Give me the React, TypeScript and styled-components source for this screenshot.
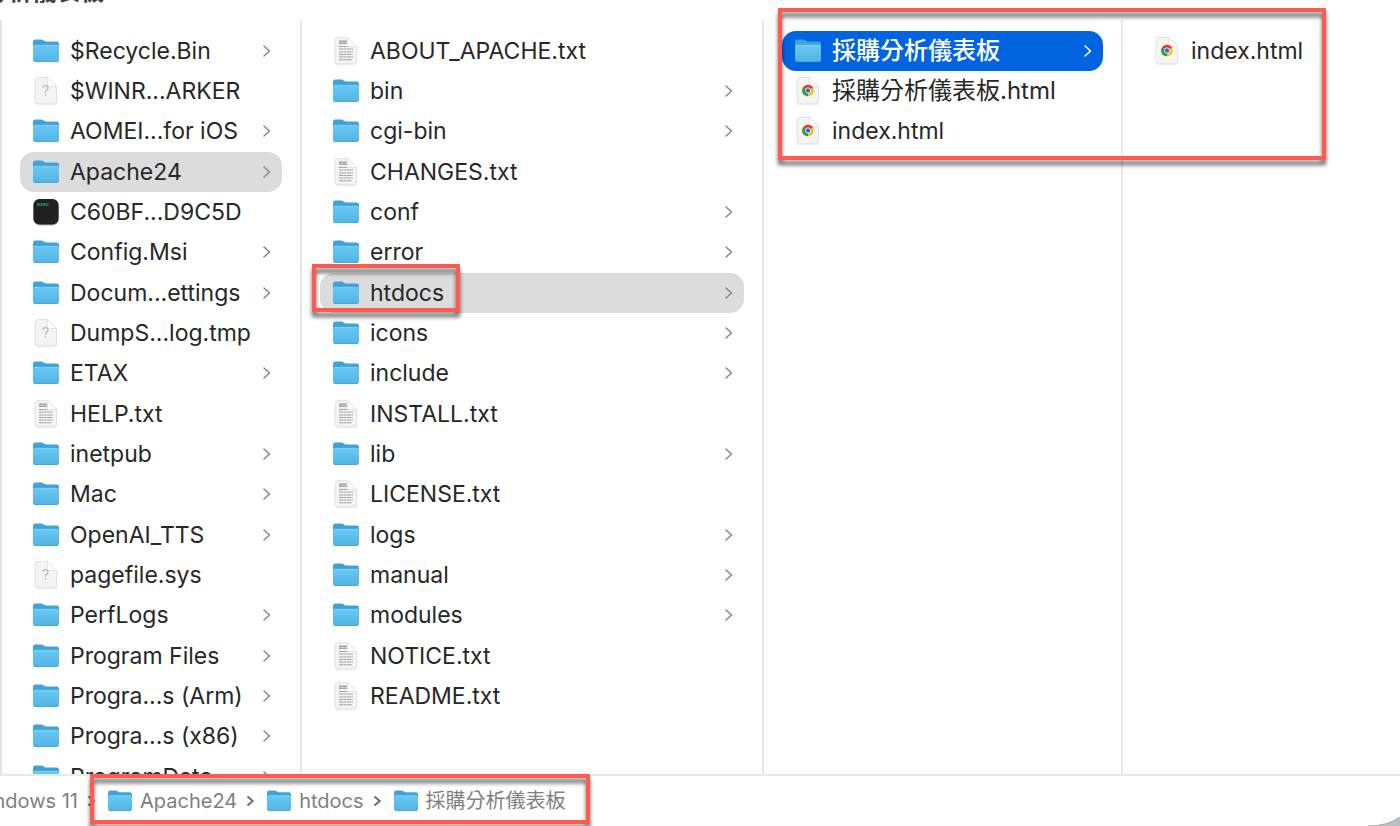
import React from "react";
import styled, { createGlobalStyle } from "styled-components";

type Kind = "folder" | "text" | "unknown" | "exec" | "chrome";
type Entry = { name: string; kind: Kind; selected?: "muted" | "active"; marked?: boolean; han?: boolean };

const GlobalStyle = createGlobalStyle`
  * { box-sizing: border-box; }
  body { margin: 0; background: #fff; }
`;

const Window = styled.div`
  position: relative;
  min-height: 100vh;
  display: flex;
  flex-direction: column;
  overflow: hidden;
  background: #fff;
  color: #272727;
  font-family: Inter, "Noto Sans CJK TC", sans-serif;
`;

const TitleBar = styled.header`
  height: 20px;
  display: flex;
  align-items: flex-start;
  overflow: hidden;
`;

const TitleClip = styled.div`
  width: 104px;
  height: 4px;
  display: flex;
  justify-content: flex-end;
  align-items: flex-end;
  overflow: hidden;
`;

const Title = styled.h1`
  margin: 0;
  flex: none;
  font-size: 24px;
  line-height: 24px;
  font-weight: 700;
  color: #404040;
`;

const Browser = styled.main`
  position: relative;
  flex: 1 0 0;
  height: 754px;
  min-height: 0;
  display: grid;
  grid-template-columns: 302px 462px 359px 1fr;
  grid-template-rows: minmax(0, 1fr);
`;

const Column = styled.ul<{ $first?: boolean; $last?: boolean }>`
  margin: 0;
  padding: 11px 18px 0;
  list-style: none;
  overflow: hidden;
  border-left: ${(p) => (p.$first ? "2px solid #e2e2e2" : "0")};
  border-right: ${(p) => (p.$last ? "0" : "2px solid #e8e8e8")};
`;

const Item = styled.li`
  position: relative;
  &:nth-child(3n) {
    margin-bottom: 1px;
  }
`;

const Row = styled.button<{ $state?: "muted" | "active" }>`
  width: 100%;
  height: 40px;
  display: flex;
  align-items: center;
  gap: 11px;
  padding: 0 10px 0 13px;
  border: 0;
  border-radius: 14px;
  background: ${(p) => (p.$state === "active" ? "#0064e1" : p.$state === "muted" ? "#dcdcdc" : "transparent")};
  color: ${(p) => (p.$state === "active" ? "#fff" : "inherit")};
  font: inherit;
  font-size: 23px;
  line-height: 40px;
  text-align: left;
`;

const IconSlot = styled.span`
  width: 26px;
  flex: none;
  display: flex;
  justify-content: center;
`;

const Name = styled.span<{ $han?: boolean; $strong?: boolean }>`
  flex: 1;
  white-space: nowrap;
  font-size: ${(p) => (p.$han ? "24px" : "23px")};
  font-weight: ${(p) => (p.$strong ? 500 : 400)};
`;

const PathBar = styled.nav`
  height: 52px;
  flex: none;
  display: flex;
  align-items: center;
  border-top: 2px solid #e9e9e9;
  color: #808080;
  font-size: 20px;
  line-height: 28px;
`;

const VolumeClip = styled.div`
  width: 78px;
  height: 28px;
  display: flex;
  justify-content: flex-end;
  overflow: hidden;
`;

const Crumb = styled.button`
  flex: none;
  display: flex;
  align-items: center;
  gap: 8px;
  padding: 0;
  border: 0;
  background: none;
  color: inherit;
  font: inherit;
  white-space: nowrap;
`;

const Separator = styled.span`
  width: 30px;
  flex: none;
  display: flex;
  padding-left: 9px;
`;

const Trail = styled.div`
  position: relative;
  height: 50px;
  display: flex;
  align-items: center;
`;

const Marker = styled.div`
  position: absolute;
  z-index: 2;
  border: 4px solid #ff5b50;
  filter: drop-shadow(0 5px 2px rgba(0, 0, 0, 0.6));
  pointer-events: none;
`;

const ColumnsMarker = styled(Marker)`
  top: -12px;
  left: 778px;
  width: 548px;
  height: 152px;
`;

const RowMarker = styled(Marker)`
  top: -9px;
  left: -8px;
  width: 148px;
  height: 48px;
`;

const TrailMarker = styled(Marker)`
  inset: -2px -24px 2px -18px;
`;

const Corner = styled.svg`
  position: absolute;
  right: 0;
  bottom: 0;
`;

function FolderIcon({ width = 26 }: { width?: number }) {
  return (
    <svg width={width} height={width - 2} viewBox="0 0 27 24" preserveAspectRatio="none" aria-hidden="true">
      <path d="M0 3Q0 .6 2.500 .6H8.600Q9.800 .6 10.800 1.300L12 2.100Q12.500 2.400 13.500 2.400H24.500Q27 2.400 27 4.800V12H0Z" fill="#3fa3da" />
      <path d="M0 7.800Q0 6 1.800 6H25.200Q27 6 27 7.800V20.800Q27 23 24.700 23H2.300Q0 23 0 20.800Z" fill="url(#folderFace)" />
      <path d="M1 6.400H26" stroke="#7dd0f7" strokeWidth="1" />
      <path d="M1.500 22.500H25.500" stroke="#48a5d6" strokeWidth="1" />
    </svg>
  );
}

function Page({ children }: { children?: React.ReactNode }) {
  return (
    <svg width="24" height="30" viewBox="0 0 24 30" aria-hidden="true">
      <path d="M1.500 5Q1.500 2 4.500 2H13.500L22.500 11V25.500Q22.500 28.500 19.500 28.500H4.500Q1.500 28.500 1.500 25.500Z" fill="none" stroke="#ececec" strokeWidth="1.500" />
      <path d="M1 4.500Q1 1.500 4 1.500H13.500L22.500 10.500V24.500Q22.500 27.500 19.500 27.500H4Q1 27.500 1 24.500Z" fill="#f4f4f4" stroke="#e0e0e0" strokeWidth=".8" />
      <path d="M13.500 1.500V8.500Q13.500 10.500 15.500 10.500H22.500Z" fill="#fff" stroke="#dedede" strokeWidth=".8" />
      {children}
    </svg>
  );
}

function KindIcon({ kind }: { kind: Kind }) {
  switch (kind) {
    case "folder":
      return <FolderIcon />;
    case "text":
      return (
        <Page>
          <g stroke="#a0a0a0" fill="none">
            <path d="M5 5.200H13M5 7.300H13" strokeWidth="1.500" strokeDasharray="3.500 .3" />
            <path d="M5 10.500H13.500M5 13H19M5 16H19M5 18.500H18.500M5 21H19M5 23.800H18" strokeWidth="1.100" strokeDasharray="4.300 .4 2.600 .4" />
          </g>
        </Page>
      );
    case "unknown":
      return (
        <Page>
          <path d="M9 11.700Q9.200 9.500 11.500 9.500Q14 9.500 14 11.700Q14 13.100 12.700 14Q11.500 14.900 11.500 16.700" fill="none" stroke="#b0b0b0" strokeWidth="1.100" />
          <circle cx="11.500" cy="19" r=".8" fill="#b0b0b0" />
        </Page>
      );
    case "chrome":
      return (
        <Page>
          <circle cx="12" cy="14.500" r="5.800" fill="#fbc116" />
          <path d="M12 14.500L6.980 11.600A5.800 5.800 0 0 1 17.020 11.600Z" fill="#e33b2e" />
          <path d="M12 14.500L6.980 11.600A5.800 5.800 0 0 0 12 20.300Z" fill="#269b48" />
          <circle cx="12" cy="14.500" r="2.900" fill="#fff" />
          <circle cx="12" cy="14.500" r="2.300" fill="#2f6de0" />
        </Page>
      );
    case "exec":
      return (
        <svg width="26" height="28" viewBox="0 0 26 28" aria-hidden="true">
          <rect x="0" y="1" width="26" height="26.500" rx="6.500" fill="#b4b4b4" />
          <rect x=".5" y="1" width="25" height="25.500" rx="6" fill="#202020" />
          <text x="4" y="8" fontFamily="Liberation Mono, monospace" fontWeight="700" fontSize="5" fill="#2fb24a">exec</text>
        </svg>
      );
  }
}

function Chevron({ color }: { color: string }) {
  return (
    <svg width="10" height="14" viewBox="0 0 10 14" aria-hidden="true">
      <path d="M2 2L7.500 7L2 12" fill="none" stroke={color} strokeWidth="1.600" strokeLinecap="round" strokeLinejoin="round" />
    </svg>
  );
}

function PathChevron() {
  return (
    <svg width="9" height="12" viewBox="0 0 9 12" aria-hidden="true">
      <path d="M1.500 1.500L6.800 6L1.500 10.500" fill="none" stroke="#6c6c6c" strokeWidth="2" strokeLinejoin="round" />
    </svg>
  );
}

const folder = (name: string): Entry => ({ name, kind: "folder" });
const text = (name: string): Entry => ({ name, kind: "text" });
const unknown = (name: string): Entry => ({ name, kind: "unknown" });

const columns: Entry[][] = [
  [
    folder("$Recycle.Bin"),
    unknown("$WINR...ARKER"),
    folder("AOMEI...for iOS"),
    { name: "Apache24", kind: "folder", selected: "muted" },
    { name: "C60BF...D9C5D", kind: "exec" },
    folder("Config.Msi"),
    folder("Docum...ettings"),
    unknown("DumpS...log.tmp"),
    folder("ETAX"),
    text("HELP.txt"),
    folder("inetpub"),
    folder("Mac"),
    folder("OpenAI_TTS"),
    unknown("pagefile.sys"),
    folder("PerfLogs"),
    folder("Program Files"),
    folder("Progra...s (Arm)"),
    folder("Progra...s (x86)"),
    folder("ProgramData"),
  ],
  [
    text("ABOUT_APACHE.txt"),
    folder("bin"),
    folder("cgi-bin"),
    text("CHANGES.txt"),
    folder("conf"),
    folder("error"),
    { name: "htdocs", kind: "folder", selected: "muted", marked: true },
    folder("icons"),
    folder("include"),
    text("INSTALL.txt"),
    folder("lib"),
    text("LICENSE.txt"),
    folder("logs"),
    folder("manual"),
    folder("modules"),
    text("NOTICE.txt"),
    text("README.txt"),
  ],
  [
    { name: "採購分析儀表板", kind: "folder", selected: "active", han: true },
    { name: "採購分析儀表板.html", kind: "chrome", han: true },
    { name: "index.html", kind: "chrome" },
  ],
  [{ name: "index.html", kind: "chrome" }],
];

const trail = ["Apache24", "htdocs", "採購分析儀表板"];

export default function App() {
  return (
    <Window>
      <GlobalStyle />
      <svg width="0" height="0" style={{ position: "absolute" }} aria-hidden="true">
        <linearGradient id="folderFace" x1="0" y1="0" x2="0" y2="1">
          <stop offset="0" stopColor="#69c8f4" />
          <stop offset="1" stopColor="#51b4e4" />
        </linearGradient>
      </svg>
      <TitleBar>
        <TitleClip>
          <Title>採購分析儀表板</Title>
        </TitleClip>
      </TitleBar>
      <Browser>
        {columns.map((entries, c) => (
          <Column key={c} $first={c === 0} $last={c === columns.length - 1}>
            {entries.map((e) => (
              <Item key={e.name}>
                <Row type="button" $state={e.selected}>
                  <IconSlot>
                    <KindIcon kind={e.kind} />
                  </IconSlot>
                  <Name $han={e.han} $strong={e.selected === "active"}>
                    {e.name}
                  </Name>
                  {e.kind === "folder" && <Chevron color={e.selected === "active" ? "#fff" : "#8a8a8a"} />}
                </Row>
                {e.marked && <RowMarker />}
              </Item>
            ))}
          </Column>
        ))}
        <ColumnsMarker />
      </Browser>
      <PathBar aria-label="Path">
        <VolumeClip>
          <Crumb type="button">Windows 11</Crumb>
        </VolumeClip>
        <Separator>
          <PathChevron />
        </Separator>
        <Trail>
          {trail.map((name, i) => (
            <React.Fragment key={name}>
              {i > 0 && (
                <Separator>
                  <PathChevron />
                </Separator>
              )}
              <Crumb type="button">
                <FolderIcon width={24} />
                {name}
              </Crumb>
            </React.Fragment>
          ))}
          <TrailMarker />
        </Trail>
      </PathBar>
      <Corner width="32" height="9" viewBox="0 0 32 9" aria-hidden="true">
        <path d="M0 9Q20 9 32 0V9Z" fill="#b9bfc4" />
        <path d="M0 9Q20 9 32 0" fill="none" stroke="#a3a7aa" strokeWidth="1" />
      </Corner>
    </Window>
  );
}
